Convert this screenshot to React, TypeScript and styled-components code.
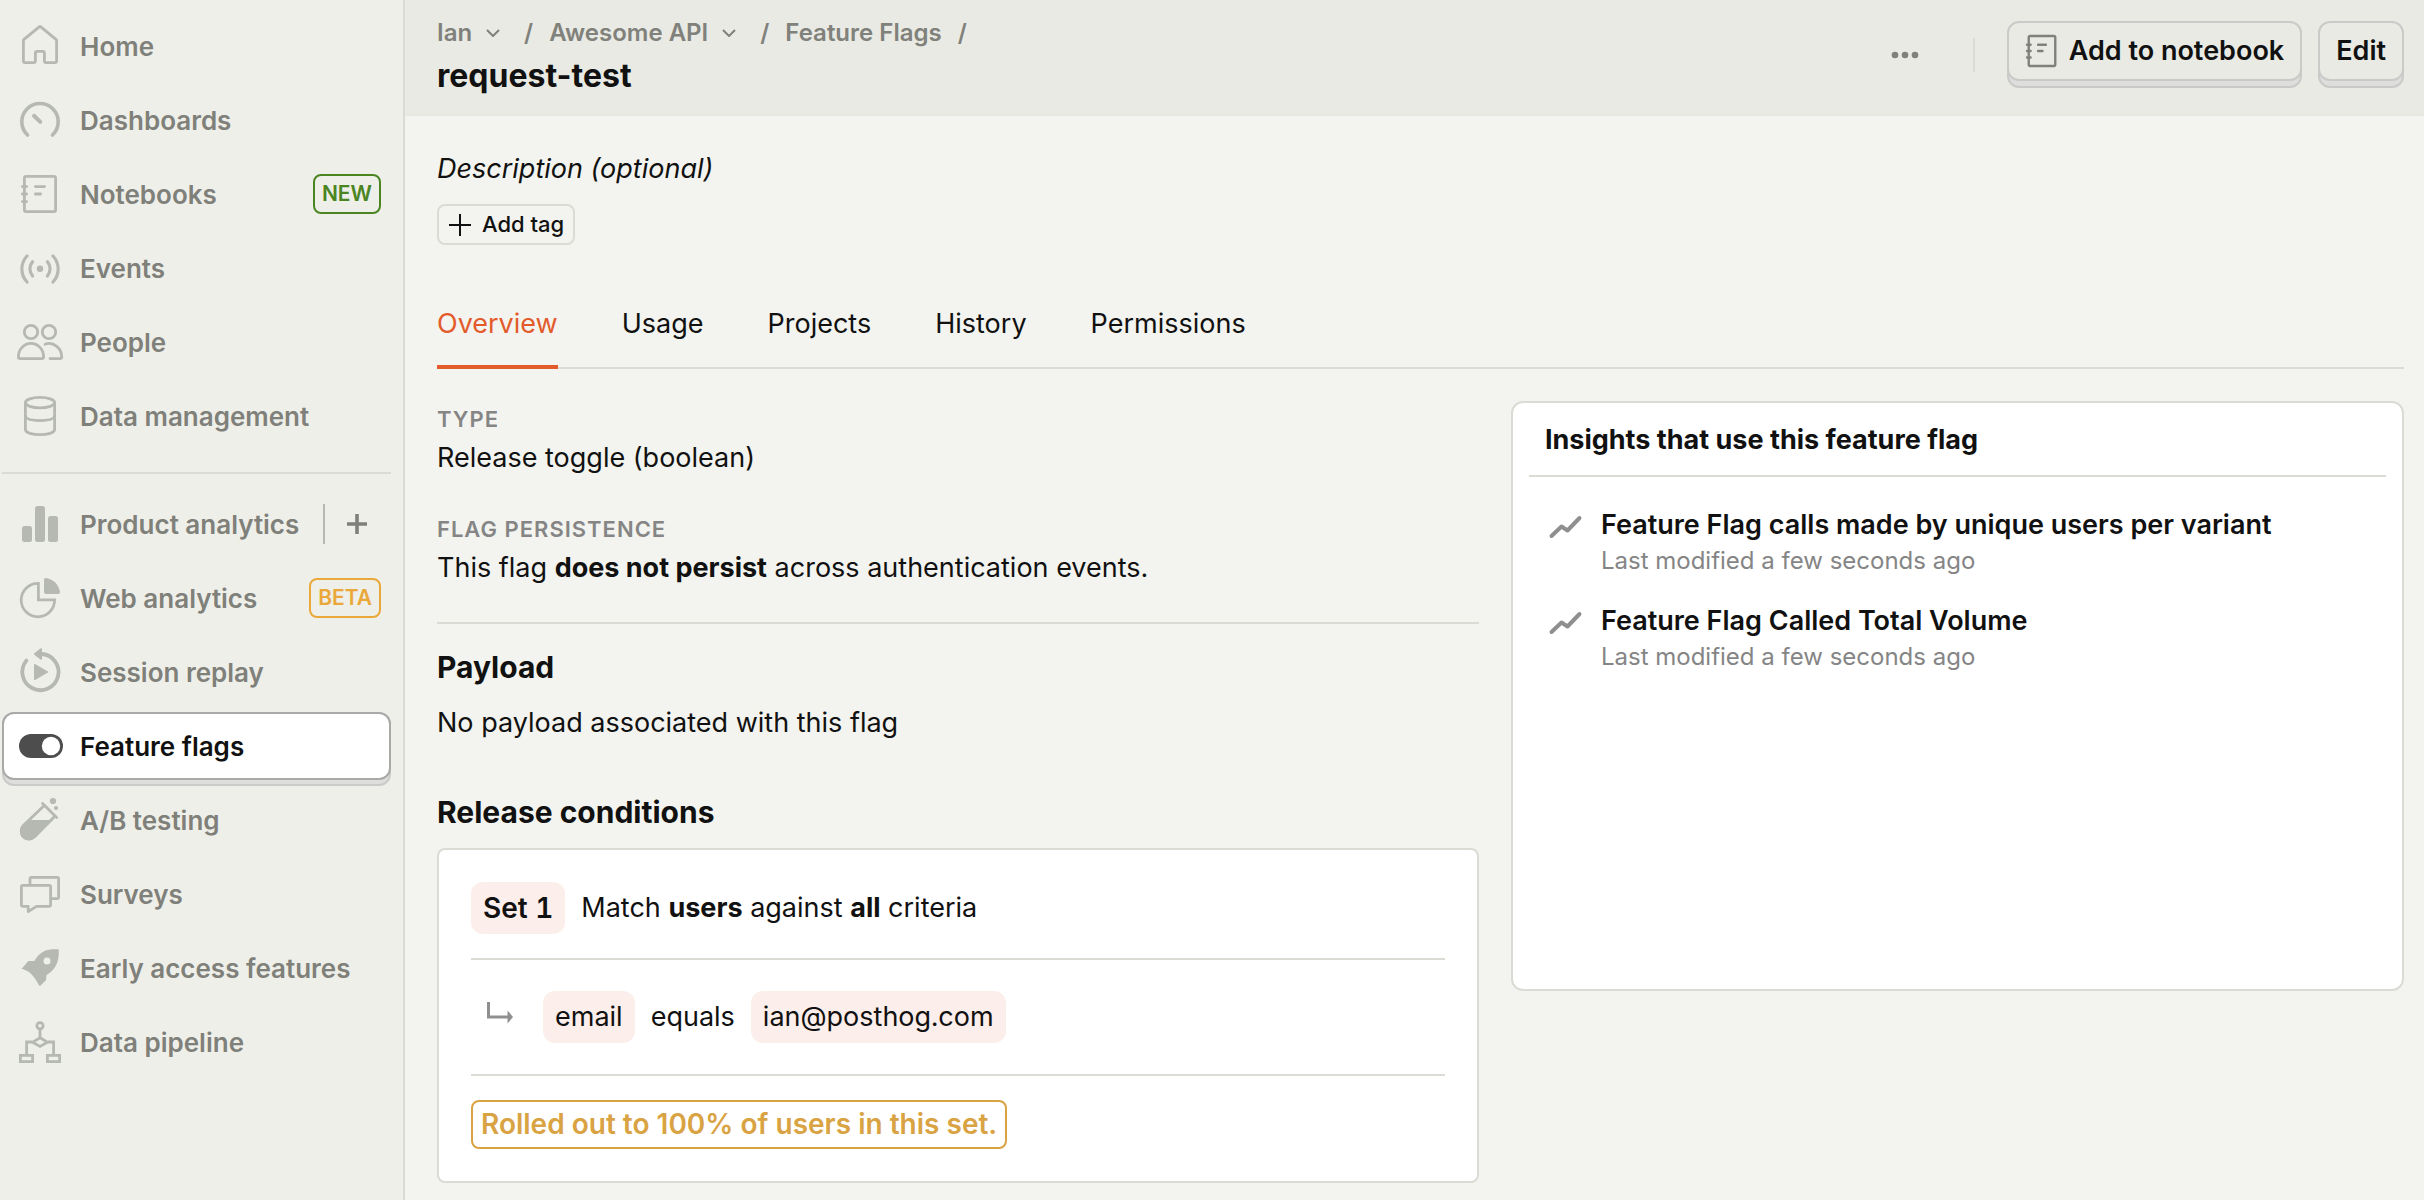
import React from 'react'
import styled, { createGlobalStyle, css } from 'styled-components'

const color = {
  page: '#f3f4ef',
  side: '#eeefe9',
  header: '#e9eae4',
  line: '#dadbd5',
  text: '#111111',
  nav: '#7f807a',
  icon: '#b6b8b2',
  muted: '#858585',
  crumb: '#80817b',
  accent: '#e35a2b',
  pink: '#fceeea',
  amber: '#d9a343',
}

const GlobalStyle = createGlobalStyle`
  *, *::before, *::after { box-sizing: border-box; }
  body {
    margin: 0;
    background: ${color.page};
    color: ${color.text};
    font-family: Inter, "Liberation Sans", sans-serif;
    font-size: 27px;
    line-height: 40px;
  }
  h1, h2, h3, p, ul, dl, dd { margin: 0; padding: 0; }
  ul { list-style: none; }
  a { color: inherit; text-decoration: none; }
  button { font: inherit; color: inherit; background: none; border: 0; padding: 0; cursor: pointer; }
  svg { display: block; flex: none; }
`

const Layout = styled.div`
  display: flex;
  min-height: 100vh;
`

/* ---------- Sidebar ---------- */

const Sidebar = styled.nav`
  flex: none;
  width: 405px;
  padding: 12px 12px 12px 2px;
  background: ${color.side};
  border-right: 2px solid ${color.line};
`

const NavList = styled.ul`
  display: flex;
  flex-direction: column;
  gap: 6px;
`

const NavDivider = styled.hr`
  height: 2px;
  margin: 22px 0 16px;
  border: 0;
  background: ${color.line};
`

const raised = css`
  border: 2px solid #cacac8;
  border-radius: 12px;
  background: #dededc;
`

const NavItem = styled.li<{ $active?: boolean }>`
  height: 68px;
  color: ${(p) => (p.$active ? color.text : color.nav)};
  ${(p) =>
    p.$active &&
    css`
      ${raised}
      height: 74px;
      margin-bottom: -6px;
    `}
`

const NavFace = styled.div<{ $active?: boolean }>`
  display: flex;
  align-items: center;
  height: 68px;
  padding-right: 8px;
  border: 2px solid transparent;
  border-radius: 12px;
  ${(p) =>
    p.$active &&
    css`
      margin: -2px -2px 0;
      border-color: #a9a9a8;
      background: #ffffff;
    `}
`

const NavLink = styled.a`
  display: flex;
  flex: 1;
  align-items: center;
  gap: 16px;
  padding-left: 12px;
  font-size: 26px;
  font-weight: 600;
  white-space: nowrap;
`

const NavLabel = styled.span`
  padding-top: 2px;
`

const NavIcon = styled.svg<{ $dark?: boolean }>`
  width: 48px;
  height: 48px;
  color: ${(p) => (p.$dark ? '#4d4d4d' : color.icon)};
`

const Badge = styled.span<{ $tone: string }>`
  height: 40px;
  padding: 0 7px;
  border: 2px solid ${(p) => p.$tone};
  border-radius: 8px;
  color: ${(p) => p.$tone};
  font-size: 21px;
  font-weight: 600;
  line-height: 36px;
`

const AddButton = styled.button`
  display: flex;
  align-items: center;
  height: 40px;
  padding: 0 14px 0 22px;
  border-left: 2px solid ${color.icon};
`

const strokeProps = {
  fill: 'none',
  stroke: 'currentColor',
  strokeWidth: 2.8,
  strokeLinecap: 'round',
  strokeLinejoin: 'round',
} as const

const notebookShape = (
  <g {...strokeProps}>
    <rect x="8.4" y="6.4" width="31.2" height="35.2" rx="1.6" />
    <path d="M6.4 16.6h4.2M6.4 24h4.2M6.4 31.6h4.2M19.4 16.6h9.2M19.4 24h5.2" />
  </g>
)

const icons: Record<string, React.ReactNode> = {
  home: (
    <path
      {...strokeProps}
      d="M23.2 4.8q.8-.6 1.6 0L40 17.4q.6.5.6 1.3V39q0 1.6-1.6 1.6H30q-1.6 0-1.6-1.6V31q0-1.7-1.7-1.7h-5.6q-1.7 0-1.7 1.7V39q0 1.6-1.6 1.6H9q-1.6 0-1.6-1.6V18.7q0-.8.6-1.3Z"
    />
  ),
  dashboard: (
    <g {...strokeProps}>
      <path strokeWidth="3.6" d="M11.5 39A18.2 18.2 0 1 1 36.5 39" />
      <path strokeWidth="4" d="M18 19.8 24.3 25.9" />
    </g>
  ),
  notebook: notebookShape,
  events: (
    <g {...strokeProps} strokeWidth="3.2">
      <circle cx="24" cy="24.8" r="3.2" fill="currentColor" stroke="none" />
      <path d="M11 12A19 19 0 0 0 11 38M37 12A19 19 0 0 1 37 38" />
      <path d="M16.6 17.6A11 11 0 0 0 16.6 32M31.4 17.6A11 11 0 0 1 31.4 32" />
    </g>
  ),
  people: (
    <g {...strokeProps}>
      <circle cx="15" cy="14" r="6.7" />
      <circle cx="33" cy="14" r="6.7" />
      <path d="M2.4 38.8C2.4 31.5 8 25.4 15 25.4S27.6 31.5 27.6 38.8q0 1.8-1.8 1.8H4.2q-1.8 0-1.8-1.8Z" />
      <path d="M29 26.2C38 23 45.7 31 45.7 38.8q0 1.8-1.8 1.8H34" />
    </g>
  ),
  database: (
    <g {...strokeProps}>
      <ellipse cx="24" cy="10.6" rx="14.6" ry="5.3" />
      <path d="M9.4 10.6V37.5C9.4 44.4 38.6 44.4 38.6 37.5V10.6" />
      <path d="M9.4 24.5C12 30 36 30 38.6 24.5" />
    </g>
  ),
  bars: (
    <g fill="currentColor">
      <rect x="6" y="26" width="10" height="16" rx="2.5" />
      <rect x="19" y="6" width="10" height="36" rx="2.5" />
      <rect x="32" y="16" width="10" height="26" rx="2.5" />
    </g>
  ),
  pie: (
    <>
      <path {...strokeProps} strokeLinejoin="miter" d="M22.4 9.4A16.7 16.7 0 1 0 38.6 25.8H22.4Z" />
      <path
        fill="currentColor"
        d="M28 6q0-2.3 2.3-1.9C37.5 5.5 42.5 10.5 43.9 17.6Q44.3 20 42 20H30q-2 0-2-2Z"
      />
    </>
  ),
  replay: (
    <>
      <path {...strokeProps} strokeWidth="3.8" d="M10.4 12.6A18.1 18.1 0 1 0 26 6" />
      <path
        fill="currentColor"
        stroke="currentColor"
        strokeWidth="2"
        strokeLinejoin="round"
        d="M19 6 25 1.2V10.8ZM19 17 31 24 19 31Z"
      />
    </>
  ),
  toggle: (
    <>
      <rect x="3" y="12" width="44" height="24" rx="12" fill="currentColor" />
      <circle cx="35" cy="24" r="9.2" fill="#ffffff" />
    </>
  ),
  flask: (
    <>
      <path {...strokeProps} d="M26.6 7.4 40.6 21.4M28.5 9.3 6.8 30A8 8 0 0 0 18.3 41L39 20" />
      <path fill="currentColor" d="M12.5 24H37L19.2 41.6A8.7 8.7 0 0 1 6.2 30Z" />
      <circle cx="37" cy="5" r="3.1" fill="currentColor" />
      <circle cx="40" cy="12" r="2.1" fill="currentColor" />
    </>
  ),
  surveys: (
    <g {...strokeProps}>
      <path d="M7 15.4H33q1.6 0 1.6 1.6V34.8q0 1.6-1.6 1.6H20.5L12.2 41.6V36.4H7q-1.6 0-1.6-1.6V17q0-1.6 1.6-1.6Z" />
      <path d="M14 14.5V9q0-1.6 1.6-1.6H41q1.6 0 1.6 1.6V27q0 1.6-1.6 1.6H35.5" />
    </g>
  ),
  rocket: (
    <path
      fill="currentColor"
      fillRule="evenodd"
      d="M42.7 5.3C33 4.8 25 5.5 18.3 17H12.3L5.7 24.7C14 27 18 32 23.7 42.3L29.5 36.8Q30.5 35.5 30.5 31C39 26 43.5 19 42.7 5.3ZM31 13.5a3.5 3.5 0 1 1 0 7 3.5 3.5 0 0 1 0-7Z"
    />
  ),
  pipeline: (
    <g {...strokeProps} strokeLinejoin="miter" strokeLinecap="butt">
      <circle cx="24" cy="7.7" r="3.1" />
      <path d="M24 11V19.5M16 24H10.6V37M32 24H37.6V37" />
      <path d="M24 19.8 31.5 24.2 24 28.4 16.5 24.2Z" />
      <rect x="4.4" y="37.4" width="12.2" height="6.2" />
      <rect x="31.4" y="37.4" width="12.2" height="6.2" />
    </g>
  ),
}

type Item = {
  label: string
  icon: string
  badge?: { text: string; tone: string }
  add?: boolean
  active?: boolean
}

const primaryItems: Item[] = [
  { label: 'Home', icon: 'home' },
  { label: 'Dashboards', icon: 'dashboard' },
  { label: 'Notebooks', icon: 'notebook', badge: { text: 'NEW', tone: '#4a8522' } },
  { label: 'Events', icon: 'events' },
  { label: 'People', icon: 'people' },
  { label: 'Data management', icon: 'database' },
]

const productItems: Item[] = [
  { label: 'Product analytics', icon: 'bars', add: true },
  { label: 'Web analytics', icon: 'pie', badge: { text: 'BETA', tone: '#eba83a' } },
  { label: 'Session replay', icon: 'replay' },
  { label: 'Feature flags', icon: 'toggle', active: true },
  { label: 'A/B testing', icon: 'flask' },
  { label: 'Surveys', icon: 'surveys' },
  { label: 'Early access features', icon: 'rocket' },
  { label: 'Data pipeline', icon: 'pipeline' },
]

function NavGroup({ items }: { items: Item[] }) {
  return (
    <NavList>
      {items.map((item) => (
        <NavItem key={item.label} $active={item.active}>
          <NavFace $active={item.active}>
            <NavLink href="#" aria-current={item.active ? 'page' : undefined}>
              <NavIcon viewBox="0 0 48 48" $dark={item.active} aria-hidden="true">
                {icons[item.icon]}
              </NavIcon>
              <NavLabel>{item.label}</NavLabel>
            </NavLink>
            {item.badge && <Badge $tone={item.badge.tone}>{item.badge.text}</Badge>}
            {item.add && (
              <AddButton aria-label="New insight">
                <svg width="20" height="20" viewBox="0 0 20 20" aria-hidden="true">
                  <path d="M10 0V20M0 10H20" stroke="currentColor" strokeWidth="3.6" />
                </svg>
              </AddButton>
            )}
          </NavFace>
        </NavItem>
      ))}
    </NavList>
  )
}

/* ---------- Header ---------- */

const Main = styled.main`
  flex: 1;
  min-width: 0;
`

const Header = styled.header`
  display: flex;
  align-items: flex-start;
  justify-content: space-between;
  padding: 16px 20px 18px 32px;
  background: ${color.header};
  border-bottom: 2px solid #e5e7e0;
`

const Crumbs = styled.div`
  display: flex;
  align-items: center;
  gap: 16px;
  color: ${color.crumb};
  font-size: 24px;
  font-weight: 600;
  line-height: 34px;
`

const CrumbButton = styled.button`
  display: flex;
  align-items: center;
  gap: 14px;
  padding-right: 8px;
`

const Title = styled.h1`
  margin-top: 6px;
  font-size: 32px;
  font-weight: 700;
  line-height: 40px;
`

const Actions = styled.div`
  display: flex;
  align-items: center;
  gap: 16px;
  margin-top: 6px;
`

const MoreButton = styled.button`
  display: flex;
  align-items: center;
  height: 48px;
  padding: 0 38px 0 16px;
  color: ${color.crumb};
`

const ActionDivider = styled.span`
  width: 2px;
  height: 34px;
  margin-right: 16px;
  background: ${color.line};
`

const ActionButton = styled.button`
  ${raised}
  height: 66px;
`

const ActionFace = styled.span`
  display: flex;
  align-items: center;
  gap: 10px;
  height: 60px;
  margin: -8px -2px 0;
  padding: 0 16px;
  border: 2px solid #cacac8;
  border-radius: 12px;
  background: ${color.header};
  font-weight: 600;
`

const NotebookIcon = styled.svg`
  width: 34px;
  height: 40px;
  color: ${color.crumb};
`

function Chevron() {
  return (
    <svg width="14" height="8" viewBox="0 0 14 8" aria-hidden="true">
      <path d="M1 1 7 7 13 1" fill="none" stroke="currentColor" strokeWidth="2" />
    </svg>
  )
}

/* ---------- Content ---------- */

const Content = styled.div`
  padding: 33px 20px 17px 32px;
`

const Description = styled.p`
  font-style: italic;
`

const AddTag = styled.button`
  display: flex;
  align-items: center;
  gap: 10px;
  margin-top: 15px;
  padding: 6px 9px;
  border: 2px solid ${color.line};
  border-radius: 8px;
  font-size: 22px;
  font-weight: 500;
  line-height: 25px;
`

const Tabs = styled.div`
  display: flex;
  gap: 64px;
  margin-top: 34px;
  box-shadow: inset 0 -2px 0 ${color.line};
`

const Tab = styled.button<{ $active?: boolean }>`
  padding: 25px 0 21px;
  border-bottom: 4px solid ${(p) => (p.$active ? color.accent : 'transparent')};
  color: ${(p) => (p.$active ? color.accent : 'inherit')};
`

const Columns = styled.div`
  display: grid;
  grid-template-columns: minmax(0, 7fr) minmax(0, 6fr);
  align-items: start;
  gap: 32px;
  margin-top: 32px;
`

const Facts = styled.dl`
  display: flex;
  flex-direction: column;
  gap: 34px;
  padding-top: 1px;
`

const FactLabel = styled.dt`
  margin-bottom: 2px;
  color: ${color.muted};
  font-size: 22px;
  font-weight: 600;
  letter-spacing: 1px;
  line-height: 34px;
  text-transform: uppercase;
`

const Rule = styled.hr<{ $margin: string }>`
  height: 2px;
  margin: ${(p) => p.$margin};
  border: 0;
  background: ${color.line};
`

const SectionTitle = styled.h2`
  margin-bottom: 16px;
  font-size: 30px;
  font-weight: 700;
  line-height: 39px;
`

const PayloadText = styled.p`
  margin-bottom: 50px;
`

const Card = styled.section<{ $radius: string; $padding: string }>`
  padding: ${(p) => p.$padding};
  border: 2px solid ${color.line};
  border-radius: ${(p) => p.$radius};
  background: #ffffff;
`

const Line = styled.div<{ $indent?: boolean }>`
  display: flex;
  align-items: center;
  gap: 16px;
  padding-left: ${(p) => (p.$indent ? '16px' : '0')};
`

const ArrowIcon = styled.svg`
  width: 26px;
  height: 30px;
  margin-right: 14px;
  color: #8f8f8f;
`

const Snack = styled.span<{ $strong?: boolean }>`
  padding: 6px 12px;
  border-radius: 12px;
  background: ${color.pink};
  font-size: ${(p) => (p.$strong ? '28px' : '27px')};
  font-weight: ${(p) => (p.$strong ? 600 : 400)};
  font-variant-numeric: tabular-nums;
`

const Rollout = styled.span`
  display: inline-block;
  padding: 0 8px;
  border: 2px solid ${color.amber};
  border-radius: 8px;
  color: ${color.amber};
  font-size: 28px;
  font-weight: 600;
  line-height: 45px;
  vertical-align: top;

  strong { font-weight: 600; }
`

const Insights = styled(Card)`
  min-height: 590px;
`

const InsightsTitle = styled.h3`
  padding-left: 16px;
  font-size: 27px;
  font-weight: 700;
  line-height: 40px;
`

const InsightList = styled.ul`
  display: flex;
  flex-direction: column;
  gap: 24px;
  padding: 0 16px;
`

const InsightItem = styled.li`
  display: flex;
  gap: 16px;
  line-height: 36px;
`

const TrendIcon = styled.svg`
  width: 40px;
  height: 40px;
  color: #8f8f8f;
`

const InsightName = styled.a`
  display: block;
  font-weight: 600;
`

const InsightMeta = styled.span`
  display: block;
  color: ${color.muted};
  font-size: 24px;
`

const tabs = ['Overview', 'Usage', 'Projects', 'History', 'Permissions']
const insights = ['Feature Flag calls made by unique users per variant', 'Feature Flag Called Total Volume']

export default function App() {
  return (
    <>
      <GlobalStyle />
      <Layout>
        <Sidebar aria-label="Main">
          <NavGroup items={primaryItems} />
          <NavDivider />
          <NavGroup items={productItems} />
        </Sidebar>
        <Main>
          <Header>
            <div>
              <Crumbs>
                <CrumbButton>
                  Ian <Chevron />
                </CrumbButton>
                <span>/</span>
                <CrumbButton>
                  Awesome API <Chevron />
                </CrumbButton>
                <span>/</span>
                <a href="#">Feature Flags</a>
                <span>/</span>
              </Crumbs>
              <Title>request-test</Title>
            </div>
            <Actions>
              <MoreButton aria-label="More">
                <svg width="28" height="8" viewBox="0 0 28 8" fill="currentColor" aria-hidden="true">
                  <circle cx="4" cy="4" r="3.3" />
                  <circle cx="14" cy="4" r="3.3" />
                  <circle cx="24" cy="4" r="3.3" />
                </svg>
              </MoreButton>
              <ActionDivider />
              <ActionButton>
                <ActionFace>
                  <NotebookIcon viewBox="4 1 40 46" aria-hidden="true">
                    {notebookShape}
                  </NotebookIcon>
                  Add to notebook
                </ActionFace>
              </ActionButton>
              <ActionButton>
                <ActionFace>Edit</ActionFace>
              </ActionButton>
            </Actions>
          </Header>
          <Content>
            <Description>Description (optional)</Description>
            <AddTag>
              <svg width="24" height="24" viewBox="0 0 24 24" aria-hidden="true">
                <path d="M12 1V23M1 12H23" stroke="currentColor" strokeWidth="2" />
              </svg>
              Add tag
            </AddTag>
            <Tabs role="tablist">
              {tabs.map((tab, i) => (
                <Tab key={tab} role="tab" aria-selected={i === 0} $active={i === 0}>
                  {tab}
                </Tab>
              ))}
            </Tabs>
            <Columns>
              <div>
                <Facts>
                  <div>
                    <FactLabel>Type</FactLabel>
                    <dd>Release toggle (boolean)</dd>
                  </div>
                  <div>
                    <FactLabel>Flag persistence</FactLabel>
                    <dd>
                      This flag <strong>does not persist</strong> across authentication events.
                    </dd>
                  </div>
                </Facts>
                <Rule $margin="34px 0 24px" />
                <SectionTitle>Payload</SectionTitle>
                <PayloadText>No payload associated with this flag</PayloadText>
                <SectionTitle>Release conditions</SectionTitle>
                <Card $radius="8px" $padding="32px">
                  <Line>
                    <Snack $strong>Set 1</Snack>
                    <span>
                      Match <strong>users</strong> against <strong>all</strong> criteria
                    </span>
                  </Line>
                  <Rule $margin="24px 0 31px" />
                  <Line $indent>
                    <ArrowIcon viewBox="0 0 26 30" aria-hidden="true">
                      <path d="M1.5 0V15H22" fill="none" stroke="currentColor" strokeWidth="3" />
                      <path d="M20.5 8.5 26 15 20.5 21.5Z" fill="currentColor" />
                    </ArrowIcon>
                    <Snack>email</Snack>
                    <span>equals</span>
                    <Snack>ian@posthog.com</Snack>
                  </Line>
                  <Rule $margin="31px 0 24px" />
                  <Rollout>
                    Rolled out to <strong>100%</strong> of <strong>users</strong> in this set.
                  </Rollout>
                </Card>
              </div>
              <Insights $radius="12px" $padding="17px 16px 16px">
                <InsightsTitle>Insights that use this feature flag</InsightsTitle>
                <Rule $margin="15px 0 30px" />
                <InsightList>
                  {insights.map((name) => (
                    <InsightItem key={name}>
                      <TrendIcon viewBox="0 0 40 40" aria-hidden="true">
                        <path
                          d="M6.5 29 16.5 19.500 22.5 23.5 34.5 11"
                          fill="none"
                          stroke="currentColor"
                          strokeWidth="4"
                          strokeLinecap="round"
                          strokeLinejoin="round"
                        />
                      </TrendIcon>
                      <div>
                        <InsightName href="#">{name}</InsightName>
                        <InsightMeta>Last modified a few seconds ago</InsightMeta>
                      </div>
                    </InsightItem>
                  ))}
                </InsightList>
              </Insights>
            </Columns>
          </Content>
        </Main>
      </Layout>
    </>
  )
}
